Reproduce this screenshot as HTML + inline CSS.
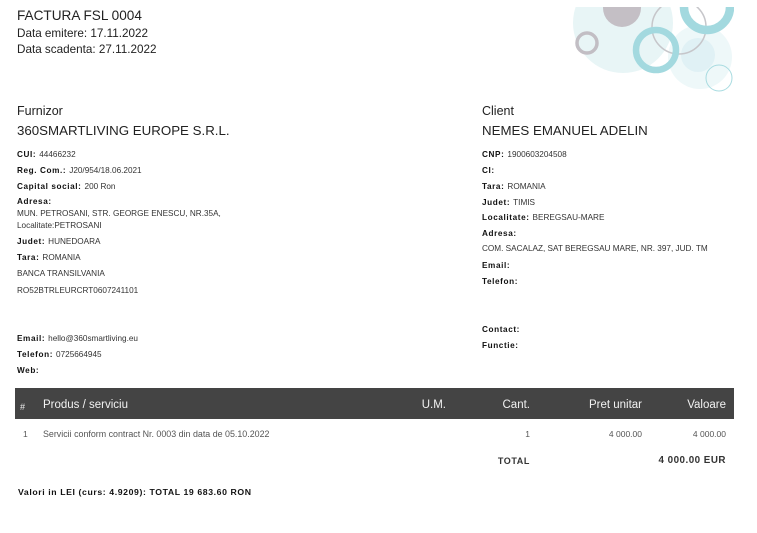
<!DOCTYPE html>
<html><head><meta charset="utf-8"><style>
*{margin:0;padding:0}
body{width:757px;height:533px;background:#fff;position:relative;overflow:hidden;font-family:"Liberation Sans",sans-serif;color:#222}
.t{position:absolute;white-space:nowrap;line-height:12px;height:12px}
.s{font-size:8.2px;color:#333}
.s b{font-weight:bold;letter-spacing:.6px;color:#111;margin-right:3px}
.r{text-align:right}
</style></head><body>
<svg style="position:absolute;left:0;top:0" width="757" height="533">
<defs><clipPath id="c"><rect x="570" y="7" width="164" height="100"/></clipPath></defs>
<g clip-path="url(#c)">
<circle cx="623" cy="23" r="50" fill="#e8f5f6"/>
<circle cx="700" cy="57" r="32" fill="#eef8f9"/>
<circle cx="698" cy="55" r="17" fill="#e0f1f5"/>
<circle cx="622" cy="8" r="19" fill="#c4bfc5"/>
<circle cx="587" cy="43" r="10" fill="none" stroke="#c2bec4" stroke-width="3.5"/>
<circle cx="679" cy="27" r="27" fill="none" stroke="#c6c6ca" stroke-width="1.5"/>
<circle cx="656" cy="50" r="20" fill="none" stroke="#a3d9df" stroke-width="6.5"/>
<circle cx="707" cy="7" r="23" fill="none" stroke="#a3d9df" stroke-width="8.5"/>
<circle cx="719" cy="78" r="13" fill="none" stroke="#a8dbe0" stroke-width="1"/>
</g>
<rect x="15" y="388" width="719" height="31" fill="#444"/>
</svg>
<div class="t" style="left:17px;top:7px;font-size:13.6px;line-height:17px;height:17px">FACTURA FSL 0004</div>
<div class="t" style="left:17px;top:27px;font-size:11.7px;line-height:13px">Data emitere: 17.11.2022</div>
<div class="t" style="left:17px;top:43px;font-size:11.7px;line-height:13px">Data scadenta: 27.11.2022</div>
<div class="t" style="left:17px;top:104px;font-size:12.5px;line-height:14px">Furnizor</div>
<div class="t" style="left:17px;top:123px;font-size:13.3px;line-height:16px">360SMARTLIVING EUROPE S.R.L.</div>
<div class="t" style="left:482px;top:104px;font-size:12.5px;line-height:14px">Client</div>
<div class="t" style="left:482px;top:123px;font-size:13.3px;line-height:16px">NEMES EMANUEL ADELIN</div>

<div class="t s" style="left:17px;top:149px"><b>CUI:</b>44466232</div>
<div class="t s" style="left:17px;top:165px"><b>Reg. Com.:</b>J20/954/18.06.2021</div>
<div class="t s" style="left:17px;top:181px"><b>Capital social:</b>200 Ron</div>
<div class="t s" style="left:17px;top:196px"><b>Adresa:</b></div>
<div class="t s" style="left:17px;top:208px">MUN. PETROSANI, STR. GEORGE ENESCU, NR.35A,</div>
<div class="t s" style="left:17px;top:220px">Localitate:PETROSANI</div>
<div class="t s" style="left:17px;top:236px"><b>Judet:</b>HUNEDOARA</div>
<div class="t s" style="left:17px;top:252px"><b>Tara:</b>ROMANIA</div>
<div class="t s" style="left:17px;top:268px">BANCA TRANSILVANIA</div>
<div class="t s" style="left:17px;top:285px">RO52BTRLEURCRT0607241101</div>
<div class="t s" style="left:17px;top:333px"><b>Email:</b>hello@360smartliving.eu</div>
<div class="t s" style="left:17px;top:349px"><b>Telefon:</b>0725664945</div>
<div class="t s" style="left:17px;top:365px"><b>Web:</b></div>

<div class="t s" style="left:482px;top:149px"><b>CNP:</b>1900603204508</div>
<div class="t s" style="left:482px;top:165px"><b>CI:</b></div>
<div class="t s" style="left:482px;top:181px"><b>Tara:</b>ROMANIA</div>
<div class="t s" style="left:482px;top:197px"><b>Judet:</b>TIMIS</div>
<div class="t s" style="left:482px;top:212px"><b>Localitate:</b>BEREGSAU-MARE</div>
<div class="t s" style="left:482px;top:228px"><b>Adresa:</b></div>
<div class="t s" style="left:482px;top:243px">COM. SACALAZ, SAT BEREGSAU MARE, NR. 397, JUD. TM</div>
<div class="t s" style="left:482px;top:260px"><b>Email:</b></div>
<div class="t s" style="left:482px;top:276px"><b>Telefon:</b></div>
<div class="t s" style="left:482px;top:324px"><b>Contact:</b></div>
<div class="t s" style="left:482px;top:340px"><b>Functie:</b></div>

<div class="t" style="left:20px;top:401px;font-size:9px;color:#eee">#</div>
<div class="t" style="left:43px;top:398px;font-size:11.5px;line-height:14px;color:#f2f2f2">Produs / serviciu</div>
<div class="t r" style="right:311px;top:398px;font-size:11.5px;line-height:14px;color:#f2f2f2">U.M.</div>
<div class="t r" style="right:227px;top:398px;font-size:11.5px;line-height:14px;color:#f2f2f2">Cant.</div>
<div class="t r" style="right:115px;top:398px;font-size:11.5px;line-height:14px;color:#f2f2f2">Pret unitar</div>
<div class="t r" style="right:31px;top:398px;font-size:11.5px;line-height:14px;color:#f2f2f2">Valoare</div>

<div class="t" style="left:23px;top:428px;font-size:8.5px;color:#555">1</div>
<div class="t" style="left:43px;top:428px;font-size:8.9px;color:#555">Servicii conform contract Nr. 0003 din data de 05.10.2022</div>
<div class="t r" style="right:227px;top:428px;font-size:8.5px;color:#555">1</div>
<div class="t r" style="right:115px;top:428px;font-size:8.5px;color:#555">4 000.00</div>
<div class="t r" style="right:31px;top:428px;font-size:8.5px;color:#555">4 000.00</div>
<div class="t r" style="right:227px;top:455px;font-size:9px;font-weight:bold;letter-spacing:.6px;color:#333">TOTAL</div>
<div class="t r" style="right:31px;top:455px;font-size:9.8px;font-weight:bold;letter-spacing:.5px;color:#333">4 000.00 EUR</div>
<div class="t" style="left:18px;top:486px;font-size:8.7px;font-weight:bold;letter-spacing:.6px;color:#111">Valori in LEI (curs: 4.9209): TOTAL 19 683.60 RON</div>
</body></html>
